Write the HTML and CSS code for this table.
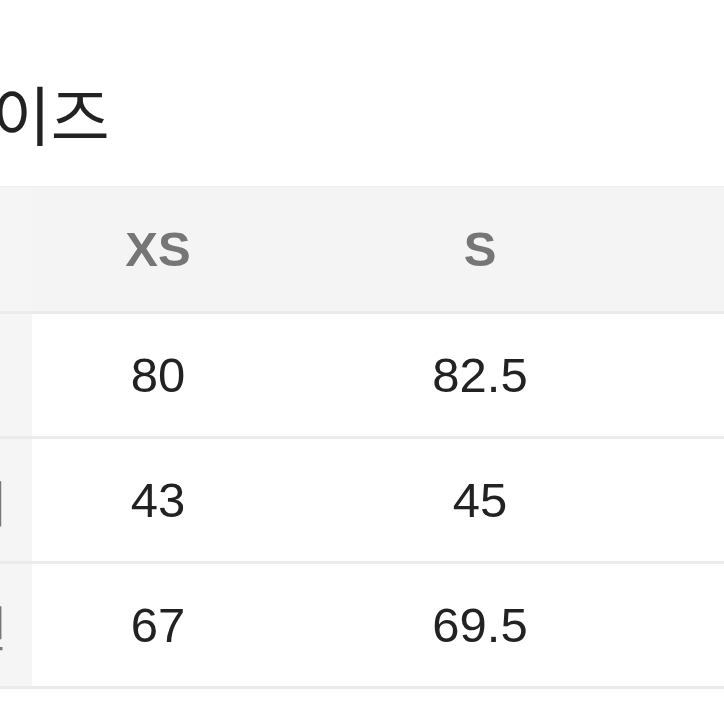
FILE: index.html
```html
<!DOCTYPE html>
<html lang="ko">
<head>
<meta charset="utf-8">
<link rel="stylesheet" href="styles.css">
</head>
<body>
<div class="page">
  <h1 class="title">사이즈</h1>
  <div class="table">
    <div class="row head">
      <div class="cell label"></div>
      <div class="cell">XS</div>
      <div class="cell">S</div>
      <div class="cell">M</div>
    </div>
    <div class="row">
      <div class="cell label">총장</div>
      <div class="cell">80</div>
      <div class="cell">82.5</div>
      <div class="cell">85</div>
    </div>
    <div class="row">
      <div class="cell label">어깨너비</div>
      <div class="cell">43</div>
      <div class="cell">45</div>
      <div class="cell">47</div>
    </div>
    <div class="row">
      <div class="cell label">가슴단면</div>
      <div class="cell">67</div>
      <div class="cell">69.5</div>
      <div class="cell">72</div>
    </div>
  </div>
</div>
</body>
</html>
```
FILE: styles.css
```css
html, body {
  margin: 0;
  padding: 0;
  background: #ffffff;
  overflow: hidden;
}
.page {
  width: 724px;
  height: 724px;
  overflow: hidden;
  padding-top: 75px;
  box-sizing: border-box;
}
.title {
  margin: 0 0 36px -67px;
  font-family: "Noto Sans CJK KR", sans-serif;
  font-weight: 400;
  font-size: 64px;
  line-height: 75px;
  color: #222222;
  white-space: nowrap;
}
.table {
  margin-left: -175px;
  width: 1243px;
}
.row {
  display: grid;
  grid-template-columns: 207px 252px 392px 392px;
  border-bottom: 3px solid #ebebeb;
}
.cell {
  height: 122px;
  display: flex;
  align-items: center;
  justify-content: center;
  font-family: "Liberation Sans", Arial, sans-serif;
  font-size: 49px;
  color: #222222;
}
.label {
  background: #f5f5f5;
  box-sizing: border-box;
  padding-right: 22px;
  font-family: "Noto Sans CJK KR", sans-serif;
  font-weight: 400;
  color: #777777;
  white-space: nowrap;
}
.head {
  background: #f4f4f4;
  border-top: 1px solid #efefef;
}
.head .cell {
  height: 124px;
  font-weight: 700;
  color: #767676;
}
```
